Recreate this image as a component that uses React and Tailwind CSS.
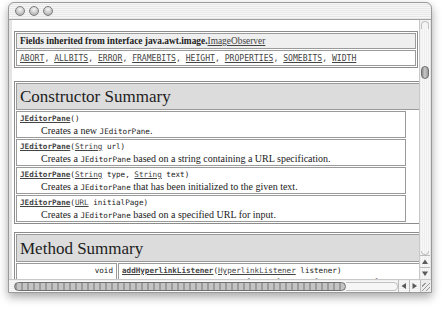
import React from 'react';

const serif = "font-['Liberation_Serif',serif]";
const mono = "font-['DejaVu_Sans_Mono',monospace]";

const constructors = [
    { args: [], desc: ['Creates a new ', 'JEditorPane', '.'] },
    { args: [['String', ' url']], desc: ['Creates a ', 'JEditorPane', ' based on a string containing a URL specification.'] },
    { args: [['String', ' type, '], ['String', ' text']], desc: ['Creates a ', 'JEditorPane', ' that has been initialized to the given text.'] },
    { args: [['URL', ' initialPage']], desc: ['Creates a ', 'JEditorPane', ' based on a specified URL for input.'] },
];

const fields = ['ABORT', 'ALLBITS', 'ERROR', 'FRAMEBITS', 'HEIGHT', 'PROPERTIES', 'SOMEBITS', 'WIDTH'];

const Light = () => (
    <div className="w-[10px] h-[10px] rounded-full border border-[#7e7e7e] bg-[radial-gradient(circle_at_50%_30%,#f6f6f6,#c0c0c0_65%,#9c9c9c)]"></div>
);

// small scroll arrow, dir: up/down/left/right
const Arrow = ({ dir }) => {
    const pts = {
        up: '3,0.5 6,5 0,5',
        down: '0,0.5 6,0.5 3,5',
        left: '0.5,3 5,0 5,6',
        right: '0.5,0 5,3 0.5,6',
    }[dir];
    const vert = dir === 'up' || dir === 'down';
    return (
        <svg width={vert ? 6 : 5.5} height={vert ? 5.5 : 6} viewBox={vert ? '0 0 6 5.5' : '0 0 5.5 6'}>
            <polygon points={pts} fill="#5a5a5a" />
        </svg>
    );
};

export default function App() {
    return (
        <div className="w-[442px] h-[311px] bg-white overflow-hidden pt-[2px] pl-[8px]">
            {/* window */}
            <div className="w-[424px] h-[291px] flex flex-col rounded-t-[6px] border border-[#9a9a9a] bg-[#e4e4e4] shadow-[0_4px_10px_rgba(0,0,0,0.35)]">
                {/* title bar */}
                <div className="h-[17px] flex items-center gap-[4px] pl-[6px] rounded-t-[6px] border-b border-[#a0a0a0] bg-[repeating-linear-gradient(180deg,#f6f6f6_0px,#f6f6f6_1px,#e8e8e8_1px,#e8e8e8_2px)]">
                    <Light />
                    <Light />
                    <Light />
                </div>

                <div className="flex flex-1 min-h-0 pl-[3px]">
                    {/* page */}
                    <div className="w-[407px] bg-white overflow-hidden text-[#222]">
                        {/* fields table */}
                        <div className="mt-[11px] ml-[2px] w-[404px] border border-[#8c8c8c] p-[1px]">
                            <div className={`h-[16px] bg-[#efefef] border border-[#9a9a9a] px-[3px] text-[9.4px] leading-[15px] font-bold ${serif}`}>
                                Fields inherited from interface java.awt.image.<span className="underline font-normal text-[#444]">ImageObserver</span>
                            </div>
                            <div className={`mt-[1px] h-[16px] border border-[#9a9a9a] px-[3px] text-[8.1px] leading-[15px] text-[#444] ${mono}`}>
                                {fields.map((f, i) => (
                                    <span key={f}>
                                        <span className="underline">{f}</span>
                                        {i < fields.length - 1 ? ', ' : ''}
                                    </span>
                                ))}
                            </div>
                        </div>

                        {/* constructor summary */}
                        <div className="mt-[13px] ml-[2px] w-[420px] border border-[#8c8c8c] p-[1px]">
                            <div className={`h-[27px] bg-[#dcdcdc] border border-[#9a9a9a] px-[3px] text-[17px] leading-[26px] text-[#1e1e1e] ${serif}`}>
                                Constructor Summary
                            </div>
                            {constructors.map((c, i) => (
                                <div key={i} className="mt-[1px] w-[390px] h-[27px] border border-[#9a9a9a] px-[3px] pt-[1px]">
                                    <div className={`text-[7.6px] leading-[12px] ${mono}`}>
                                        <span className="underline font-bold text-[#444]">JEditorPane</span>(
                                        {c.args.map(([t, rest], j) => (
                                            <span key={j}>
                                                <span className="underline text-[#444]">{t}</span>{rest}
                                            </span>
                                        ))}
                                        )
                                    </div>
                                    <div className={`pl-[21px] text-[10px] leading-[12px] ${serif}`}>
                                        {c.desc[0]}<span className={`${mono} text-[7.6px]`}>{c.desc[1]}</span>{c.desc[2]}
                                    </div>
                                </div>
                            ))}
                        </div>

                        {/* method summary */}
                        <div className="mt-[8px] ml-[2px] w-[420px] border border-[#8c8c8c] p-[1px]">
                            <div className={`h-[28px] bg-[#dcdcdc] border border-[#9a9a9a] px-[3px] text-[17px] leading-[27px] text-[#1e1e1e] ${serif}`}>
                                Method Summary
                            </div>
                            <div className="mt-[1px] flex gap-[1px] h-[28px]">
                                <div className={`w-[101px] shrink-0 border border-[#9a9a9a] px-[3px] text-right text-[7.6px] leading-[14px] ${mono}`}>void</div>
                                <div className="flex-1 min-w-0 overflow-hidden border border-[#9a9a9a] px-[3px]">
                                    <div className={`text-[7.6px] leading-[14px] whitespace-nowrap ${mono}`}>
                                        <span className="underline font-bold text-[#444]">addHyperlinkListener</span>(<span className="underline text-[#444]">HyperlinkListener</span> listener)
                                    </div>
                                    <div className={`pl-[21px] text-[10px] leading-[10px] whitespace-nowrap ${serif}`}>
                                        Adds a hyperlink listener for notification of any changes, for example when a link is selected.
                                    </div>
                                </div>
                            </div>
                        </div>
                    </div>

                    {/* vertical scrollbar */}
                    <div className="w-[11px] flex flex-col bg-[repeating-linear-gradient(90deg,#eeeeee_0px,#eeeeee_1px,#f8f8f8_1px,#f8f8f8_2px)] border-l border-[#c8c8c8]">
                        <div className="flex-1">
                            <div className="mx-[1px] mt-[1px] h-[8px] rounded-t-full border border-b-0 border-[#c0c0c0] bg-[#f4f4f4]"></div>
                            <div className="mx-[1px] mt-[37px] h-[13px] rounded-full border border-[#707070] bg-[linear-gradient(90deg,#8a8a8a,#c8c8c8_45%,#9a9a9a)]"></div>
                        </div>
                        <div className="mx-[1px] h-[4px] rounded-b-full border border-t-0 border-[#c0c0c0]"></div>
                        <div className="h-[12px] flex items-center justify-center border-t border-[#bbb]"><Arrow dir="up" /></div>
                        <div className="h-[12px] flex items-center justify-center border-t border-[#bbb]"><Arrow dir="down" /></div>
                    </div>
                </div>

                {/* horizontal scrollbar */}
                <div className="h-[13px] flex items-stretch pl-[3px] border-t border-[#c8c8c8] bg-[repeating-linear-gradient(180deg,#eeeeee_0px,#eeeeee_1px,#f8f8f8_1px,#f8f8f8_2px)]">
                    <div className="w-[386px] flex items-center pl-[2px]">
                        <div className="w-[332px] h-[9px] rounded-full border border-[#707070] bg-[repeating-linear-gradient(90deg,#9c9c9c_0px,#9c9c9c_2px,#c4c4c4_2px,#c4c4c4_6px)]"></div>
                        <div className="flex-1 h-[9px] rounded-r-full border border-l-0 border-[#c0c0c0] bg-[#f6f6f6]"></div>
                    </div>
                    <div className="w-[11px] flex items-center justify-center border-l border-[#bbb]"><Arrow dir="left" /></div>
                    <div className="w-[11px] flex items-center justify-center border-l border-[#bbb]"><Arrow dir="right" /></div>
                    <div className="flex-1 border-l border-[#bbb] bg-[#ececec] flex items-end justify-end p-[1px]">
                        <div className="w-[8px] h-[8px] bg-[repeating-linear-gradient(135deg,transparent_0px,transparent_2px,#9a9a9a_2px,#9a9a9a_3px)]"></div>
                    </div>
                </div>
            </div>
        </div>
    );
}
